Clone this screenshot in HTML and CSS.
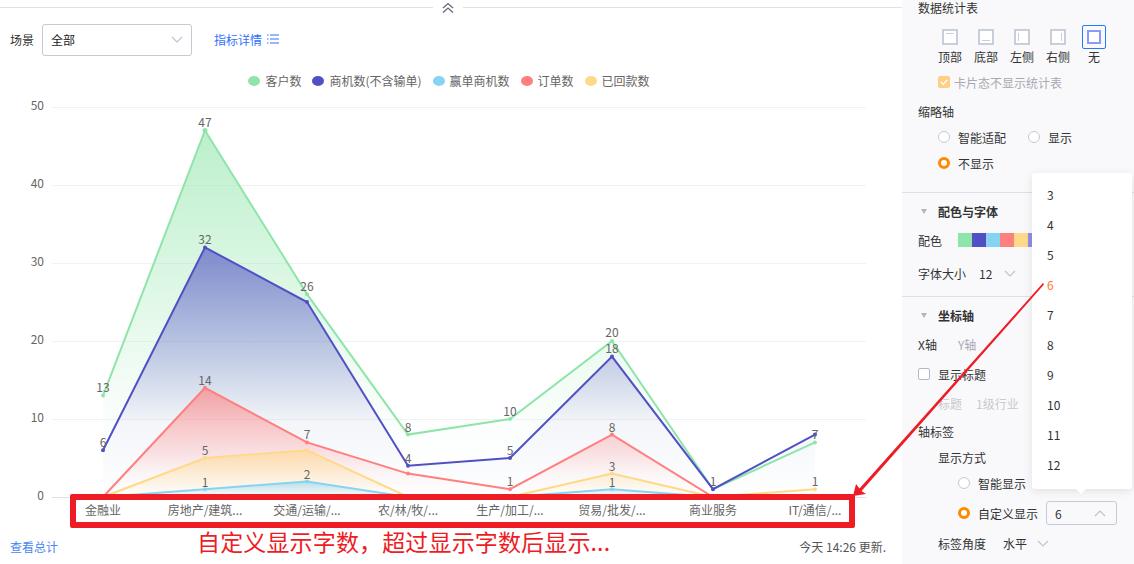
FILE: index.html
```html
<!DOCTYPE html>
<html lang="zh-CN">
<head>
    <meta charset="UTF-8">
    <title>自定义显示字数</title>
    <link rel="stylesheet" href="styles.css">
</head>
<body>
    <div class="app">
        <div class="main">
            <div class="fold">
                <span class="fold-line"></span>
                <svg class="fold-icon" width="30" height="14" viewBox="0 0 30 14">
                    <path d="M10 8l5-4.500 5 4.500M10 12.500l5-4.500 5 4.500" fill="none" stroke="#667" stroke-width="1.300"/>
                </svg>
                <span class="fold-line"></span>
            </div>

            <div class="filters">
                <span class="filter-label">场景</span>
                <div class="select">
                    <span>全部</span>
                    <svg width="12" height="7" viewBox="0 0 12 7"><path d="M1 1l5 5 5-5" fill="none" stroke="#c0c4cc" stroke-width="1.200"/></svg>
                </div>
                <a class="detail-link" href="#">指标详情
                    <svg width="12" height="10" viewBox="0 0 12 10"><path d="M3 1h9M3 5h9M3 9h9M0 1h1.500M0 5h1.500M0 9h1.500" stroke="#2f6fff" stroke-width="1"/></svg>
                </a>
            </div>

            <div class="legend">
                <span class="legend-item"><i class="mark c-green"></i>客户数</span>
                <span class="legend-item"><i class="mark c-blue"></i>商机数(不含输单)</span>
                <span class="legend-item"><i class="mark c-sky"></i>赢单商机数</span>
                <span class="legend-item"><i class="mark c-red"></i>订单数</span>
                <span class="legend-item"><i class="mark c-yellow"></i>已回款数</span>
            </div>

            <svg class="chart" width="902" height="434" viewBox="0 92 902 434">
                <defs>
                    <linearGradient id="g-green" x1="0" y1="0" x2="0" y2="1"><stop offset="0" stop-color="#8fe5a9" stop-opacity=".6"/><stop offset=".8" stop-color="#8fe5a9" stop-opacity=".03"/><stop offset="1" stop-color="#8fe5a9" stop-opacity="0"/></linearGradient>
                    <linearGradient id="g-blue" x1="0" y1="0" x2="0" y2="1"><stop offset="0" stop-color="#5050c4" stop-opacity=".65"/><stop offset=".7" stop-color="#5050c4" stop-opacity=".05"/><stop offset="1" stop-color="#5050c4" stop-opacity="0"/></linearGradient>
                    <linearGradient id="g-sky" x1="0" y1="0" x2="0" y2="1"><stop offset="0" stop-color="#87d3f2" stop-opacity=".6"/><stop offset="1" stop-color="#87d3f2" stop-opacity="0"/></linearGradient>
                    <linearGradient id="g-red" x1="0" y1="0" x2="0" y2="1"><stop offset="0" stop-color="#ff7f7f" stop-opacity=".65"/><stop offset=".8" stop-color="#ff7f7f" stop-opacity=".05"/><stop offset="1" stop-color="#ff7f7f" stop-opacity="0"/></linearGradient>
                    <linearGradient id="g-yellow" x1="0" y1="0" x2="0" y2="1"><stop offset="0" stop-color="#ffd98a" stop-opacity=".6"/><stop offset="1" stop-color="#ffd98a" stop-opacity="0"/></linearGradient>
                </defs>

                <g class="grid">
                    <line x1="52" y1="107.500" x2="866" y2="107.500"/>
                    <line x1="52" y1="185.500" x2="866" y2="185.500"/>
                    <line x1="52" y1="263.500" x2="866" y2="263.500"/>
                    <line x1="52" y1="341.500" x2="866" y2="341.500"/>
                    <line x1="52" y1="419.500" x2="866" y2="419.500"/>
                    <line class="base" x1="52" y1="497.500" x2="866" y2="497.500"/>
                </g>

                <g class="y-labels">
                    <text x="44" y="110">50</text>
                    <text x="44" y="188">40</text>
                    <text x="44" y="266">30</text>
                    <text x="44" y="344">20</text>
                    <text x="44" y="422">10</text>
                    <text x="44" y="500">0</text>
                </g>

                <polygon fill="url(#g-green)" points="103,497 103,395.600 205,130.400 307,294.200 408,434.600 510,419 612,341 713,489.200 815,442.400 815,497"/>
                <polygon fill="url(#g-blue)" points="103,497 103,450.200 205,247.400 307,302 408,465.800 510,458 612,356.600 713,489.200 815,434.600 815,497"/>
                <polygon fill="url(#g-red)" points="103,497 205,387.800 307,442.400 408,473.600 510,489.200 612,434.600 713,497 815,497"/>
                <polygon fill="url(#g-yellow)" points="103,497 205,458 307,450.200 408,497 510,497 612,473.600 713,497 815,489.200 815,497"/>
                <polygon fill="url(#g-sky)" points="103,497 205,489.200 307,481.400 408,497 510,497 612,489.200 713,497 815,497"/>

                <g class="series">
                    <polyline stroke="#8fe5a9" points="103,395.600 205,130.400 307,294.200 408,434.600 510,419 612,341 713,489.200 815,442.400"/>
                    <polyline stroke="#5050c4" points="103,450.200 205,247.400 307,302 408,465.800 510,458 612,356.600 713,489.200 815,434.600"/>
                    <polyline stroke="#87d3f2" points="103,497 205,489.200 307,481.400 408,497 510,497 612,489.200 713,497 815,497"/>
                    <polyline stroke="#ff7f7f" points="103,497 205,387.800 307,442.400 408,473.600 510,489.200 612,434.600 713,497 815,497"/>
                    <polyline stroke="#ffd98a" points="103,497 205,458 307,450.200 408,497 510,497 612,473.600 713,497 815,489.200"/>
                </g>

                <g fill="#8fe5a9">
                    <circle cx="103" cy="395.600" r="2"/><circle cx="205" cy="130.400" r="2.500"/><circle cx="307" cy="294.200" r="2"/><circle cx="408" cy="434.600" r="2"/><circle cx="510" cy="419" r="2"/><circle cx="612" cy="341" r="2"/><circle cx="815" cy="442.400" r="2"/>
                </g>
                <g fill="#5050c4">
                    <circle cx="103" cy="450.200" r="2"/><circle cx="205" cy="247.400" r="2"/><circle cx="307" cy="302" r="2"/><circle cx="408" cy="465.800" r="2"/><circle cx="510" cy="458" r="2"/><circle cx="612" cy="356.600" r="2"/><circle cx="713" cy="489.200" r="2"/><circle cx="815" cy="434.600" r="2"/>
                </g>
                <g fill="#ff7f7f">
                    <circle cx="205" cy="387.800" r="2"/><circle cx="307" cy="442.400" r="2"/><circle cx="408" cy="473.600" r="2"/><circle cx="510" cy="489.200" r="2"/><circle cx="612" cy="434.600" r="2"/>
                </g>
                <g fill="#ffd98a">
                    <circle cx="205" cy="458" r="2"/><circle cx="307" cy="450.200" r="2"/><circle cx="612" cy="473.600" r="2"/><circle cx="815" cy="489.200" r="2"/>
                </g>
                <g fill="#87d3f2">
                    <circle cx="205" cy="489.200" r="2"/><circle cx="307" cy="481.400" r="2"/><circle cx="612" cy="489.200" r="2"/>
                </g>

                <g class="values">
                    <text x="103" y="392">13</text>
                    <text x="205" y="127">47</text>
                    <text x="307" y="291">26</text>
                    <text x="408" y="432">8</text>
                    <text x="510" y="416">10</text>
                    <text x="612" y="337">20</text>
                    <text x="103" y="447">6</text>
                    <text x="205" y="244">32</text>
                    <text x="408" y="463">4</text>
                    <text x="510" y="455">5</text>
                    <text x="612" y="353">18</text>
                    <text x="713" y="486">1</text>
                    <text x="815" y="439">7</text>
                    <text x="205" y="385">14</text>
                    <text x="307" y="439">7</text>
                    <text x="510" y="486">1</text>
                    <text x="612" y="432">8</text>
                    <text x="205" y="455">5</text>
                    <text x="612" y="471">3</text>
                    <text x="815" y="486">1</text>
                    <text x="205" y="487">1</text>
                    <text x="307" y="479">2</text>
                    <text x="612" y="487">1</text>
                </g>

                <g class="x-labels">
                    <text x="103" y="515">金融业</text>
                    <text x="205" y="515">房地产/建筑...</text>
                    <text x="307" y="515">交通/运输/...</text>
                    <text x="408" y="515">农/林/牧/...</text>
                    <text x="510" y="515">生产/加工/...</text>
                    <text x="612" y="515">贸易/批发/...</text>
                    <text x="713" y="515">商业服务</text>
                    <text x="815" y="515">IT/通信/...</text>
                </g>
            </svg>

            <div class="foot">
                <a class="foot-link" href="#">查看总计</a>
                <span class="foot-time">今天 14:26 更新.</span>
            </div>
        </div>

        <div class="side">
            <div class="section">
                <div class="row first">数据统计表</div>
                <div class="layouts">
                    <div class="layout">
                        <span class="layout-box"><svg width="16" height="16" viewBox="0 0 16 16"><rect x="1" y="1" width="14" height="14" fill="#fff" stroke="#c9cedb" stroke-width="2"/><path d="M4 4.500h8" stroke="#c9cedb"/></svg></span>
                        顶部
                    </div>
                    <div class="layout">
                        <span class="layout-box"><svg width="16" height="16" viewBox="0 0 16 16"><rect x="1" y="1" width="14" height="14" fill="#fff" stroke="#c9cedb" stroke-width="2"/><path d="M4 11.500h8" stroke="#c9cedb"/></svg></span>
                        底部
                    </div>
                    <div class="layout">
                        <span class="layout-box"><svg width="16" height="16" viewBox="0 0 16 16"><rect x="1" y="1" width="14" height="14" fill="#fff" stroke="#c9cedb" stroke-width="2"/><path d="M4.500 4v8" stroke="#c9cedb"/></svg></span>
                        左侧
                    </div>
                    <div class="layout">
                        <span class="layout-box"><svg width="16" height="16" viewBox="0 0 16 16"><rect x="1" y="1" width="14" height="14" fill="#fff" stroke="#c9cedb" stroke-width="2"/><path d="M11.500 4v8" stroke="#c9cedb"/></svg></span>
                        右侧
                    </div>
                    <div class="layout">
                        <span class="layout-box on"><svg width="14" height="14" viewBox="0 0 14 14"><rect x="1" y="1" width="12" height="12" fill="#fff" stroke="#8a9cf5" stroke-width="2"/></svg></span>
                        无
                    </div>
                </div>
                <div class="row in1 check-row">
                    <span class="check on"><svg width="12" height="12" viewBox="0 0 12 12"><path d="M3 6l2.200 2.200L9.200 4" fill="none" stroke="#fff" stroke-width="1.300"/></svg></span>
                    <span class="muted">卡片态不显示统计表</span>
                </div>
                <div class="row mt-9">缩略轴</div>
                <div class="row tall in1 mt-3">
                    <label class="radio w-90"><i></i>智能适配</label>
                    <label class="radio"><i></i>显示</label>
                </div>
                <div class="row tall in1 mt-0">
                    <label class="radio on"><i></i>不显示</label>
                </div>
            </div>

            <div class="section s2">
                <div class="row head"><i class="tri"></i>配色与字体</div>
                <div class="row mt-9">
                    <span class="w-40">配色</span>
                    <span class="swatches">
                        <i class="c-green"></i><i class="c-blue"></i><i class="c-sky"></i><i class="c-red"></i><i class="c-yellow"></i><i class="c-violet"></i>
                    </span>
                </div>
                <div class="row mt-13">
                    <span class="w-61">字体大小</span>
                    <span class="w-25">12</span>
                    <svg width="12" height="7" viewBox="0 0 12 7"><path d="M1 1l5 5 5-5" fill="none" stroke="#c0c4cc" stroke-width="1.200"/></svg>
                </div>
            </div>

            <div class="section s3">
                <div class="row head"><i class="tri"></i>坐标轴</div>
                <div class="row mt-9">
                    <span class="w-40">X轴</span>
                    <span class="muted">Y轴</span>
                </div>
                <div class="row mt-10">
                    <span class="check"></span>
                    <span>显示标题</span>
                </div>
                <div class="row in1 mt-9 faint">
                    <span class="w-38">标题</span>
                    <span>1级行业</span>
                </div>
                <div class="row mt-8">轴标签</div>
                <div class="row in1 mt-6">显示方式</div>
                <div class="row in2 mt-6">
                    <label class="radio w-79"><i></i>智能显示</label>
                    <label class="radio"><i></i></label>
                </div>
                <div class="row in2 mt-8 custom-row">
                    <label class="radio w-88"><i class="ring"></i>自定义显示</label>
                    <div class="num-select">
                        <span>6</span>
                        <svg width="12" height="7" viewBox="0 0 12 7"><path d="M1 6l5-5 5 5" fill="none" stroke="#c0c4cc" stroke-width="1.200"/></svg>
                    </div>
                </div>
                <div class="row in1 mt-8">
                    <span class="w-65">标签角度</span>
                    <span class="w-34">水平</span>
                    <svg width="12" height="7" viewBox="0 0 12 7"><path d="M1 1l5 5 5-5" fill="none" stroke="#c0c4cc" stroke-width="1.200"/></svg>
                </div>
            </div>

            <ul class="dropdown">
                <li>3</li>
                <li>4</li>
                <li>5</li>
                <li class="active">6</li>
                <li>7</li>
                <li>8</li>
                <li>9</li>
                <li>10</li>
                <li>11</li>
                <li>12</li>
            </ul>
        </div>

        <!-- 标注 -->
        <div class="note-box"></div>
        <div class="note-text">自定义显示字数，超过显示字数后显示...</div>
        <svg class="note-arrow" width="1134" height="564" viewBox="0 0 1134 564">
            <polygon fill="#ee1c25" points="1043,283 1044,284.500 861.500,491 866,494 853,496 856,484 859.500,488.500"/>
        </svg>
    </div>
</body>
</html>
```

FILE: styles.css
```css
* {
    margin: 0;
    padding: 0;
    box-sizing: border-box;
}

body {
    font-family: "Noto Sans CJK SC", "Liberation Sans", sans-serif;
    font-size: 12px;
    color: #333;
    background-color: #fff;
}

a {
    text-decoration: none;
}

i {
    font-style: normal;
}

.app {
    position: relative;
    display: flex;
    overflow: hidden;
    width: 1134px;
    height: 564px;
}

/* 左侧图表 */
.main {
    flex: none;
    width: 902px;
}

.fold {
    display: flex;
    align-items: center;
    height: 14px;
}

.fold-line {
    flex: 1;
    height: 1px;
    background-color: #e0e0e6;
}

.fold-line:first-child {
    flex: none;
    width: 433px;
}

.fold-icon {
    display: block;
}

.filters {
    display: flex;
    align-items: center;
    margin-top: 10px;
    padding-left: 10px;
    height: 32px;
}

.filter-label {
    width: 32px;
    padding-bottom: 2px;
}

.select {
    display: flex;
    align-items: center;
    justify-content: space-between;
    padding: 0 8px 2px;
    width: 150px;
    height: 32px;
    border: 1px solid #c8c8d4;
    border-radius: 3px;
    color: #222;
}

.detail-link {
    display: flex;
    align-items: center;
    gap: 5px;
    margin-left: 22px;
    padding-bottom: 2px;
    color: #2f6fff;
}

.legend {
    display: flex;
    justify-content: center;
    gap: 11px;
    margin-top: 16px;
    padding-right: 4px;
    height: 18px;
    line-height: 18px;
    color: #666;
}

.legend-item {
    display: flex;
    align-items: center;
    gap: 5px;
}

.mark {
    width: 12px;
    height: 10px;
    border-radius: 50%;
}

.c-green {
    background-color: #8fe5a9;
}

.c-blue {
    background-color: #5050c4;
}

.c-sky {
    background-color: #87d3f2;
}

.c-red {
    background-color: #ff7f7f;
}

.c-yellow {
    background-color: #ffd98a;
}

.c-violet {
    background-color: #8f8fe0;
}

.chart {
    display: block;
    margin-top: 2px;
    font-size: 12px;
}

.grid line {
    stroke: #f2f2f4;
    stroke-width: 1;
}

.grid .base {
    stroke: #e0e0ea;
}

.y-labels text {
    fill: #666;
    text-anchor: end;
}

.series polyline {
    fill: none;
    stroke-width: 2;
}

.values text {
    fill: #666;
    text-anchor: middle;
}

.x-labels text {
    fill: #666;
    text-anchor: middle;
}

.foot {
    display: flex;
    justify-content: space-between;
    margin-top: 11px;
    padding: 0 16px 0 10px;
    line-height: 20px;
}

.foot-link {
    color: #4a86f0;
}

.foot-time {
    color: #555;
}

/* 右侧设置 */
.side {
    position: relative;
    flex: none;
    width: 232px;
    background-color: #f9f9fb;
}

.section {
    height: 193px;
    border-bottom: 1px solid #dfdfea;
}

.s2 {
    height: 104px;
    padding-top: 8px;
}

.s3 {
    height: auto;
    padding-top: 8px;
    border-bottom: 0;
}

.row {
    display: flex;
    align-items: center;
    height: 20px;
    padding-left: 16px;
}

.row.first {
    height: 14px;
}

.row.tall {
    height: 26px;
}

.row.custom-row {
    height: 24px;
}

.in1 {
    padding-left: 36px;
}

.in2 {
    padding-left: 56px;
}

.mt-0 {
    margin-top: 0;
}

.mt-3 {
    margin-top: 3px;
}

.mt-6 {
    margin-top: 6px;
}

.mt-8 {
    margin-top: 8px;
}

.mt-9 {
    margin-top: 9px;
}

.mt-10 {
    margin-top: 10px;
}

.mt-13 {
    margin-top: 13px;
}

.w-25 {
    width: 25px;
}

.w-34 {
    width: 34px;
}

.w-38 {
    width: 38px;
}

.w-40 {
    width: 40px;
}

.w-61 {
    width: 61px;
}

.w-65 {
    width: 65px;
}

.w-79 {
    width: 79px;
}

.w-88 {
    width: 88px;
}

.w-90 {
    width: 90px;
}

.layouts {
    display: flex;
    margin-top: 11px;
    padding-left: 30px;
}

.layout {
    display: flex;
    flex-direction: column;
    align-items: center;
    width: 36px;
    line-height: 16px;
}

.layout-box {
    display: flex;
    align-items: center;
    justify-content: center;
    width: 24px;
    height: 24px;
}

.layout-box.on {
    border: 1px solid #1f7cff;
    border-radius: 2px;
}

.layout-box svg {
    display: block;
}

.check-row {
    margin-top: 7px;
}

.check {
    display: block;
    flex: none;
    margin-right: 8px;
    width: 12px;
    height: 12px;
    border: 1px solid #b8b8c4;
    border-radius: 2px;
    background-color: #fff;
}

.check.on {
    margin-right: 4px;
    border: 0;
    background-color: #ffcf87;
}

.check svg {
    display: block;
}

.muted {
    color: #a8a8b2;
}

.faint {
    color: #c8c8d0;
}

.radio {
    display: flex;
    align-items: center;
    gap: 8px;
}

.radio i {
    flex: none;
    width: 12px;
    height: 12px;
    border: 1px solid #c8c8d4;
    border-radius: 50%;
    background-color: #fff;
}

.radio.on i,
.radio .ring {
    border: 3px solid #ff8a00;
}

.head {
    font-weight: bold;
}

.tri {
    margin-right: 11px;
    margin-left: 3px;
    width: 0;
    height: 0;
    border-top: 5px solid #b4b4c0;
    border-right: 3.500px solid transparent;
    border-left: 3.500px solid transparent;
}

.swatches {
    display: flex;
}

.swatches i {
    width: 14px;
    height: 14px;
}

.num-select {
    display: flex;
    align-items: center;
    justify-content: space-between;
    padding: 0 10px 0 8px;
    width: 71px;
    height: 24px;
    border: 1px solid #c8c8d8;
    border-radius: 3px;
}

.dropdown {
    position: absolute;
    top: 173px;
    left: 130px;
    width: 100px;
    height: 316px;
    padding-top: 7px;
    list-style: none;
    border-radius: 3px;
    background-color: #fff;
    box-shadow: 0 2px 10px rgba(0, 0, 0, .1);
}

.dropdown::after {
    content: "";
    position: absolute;
    bottom: -5px;
    left: 44px;
    border-top: 5px solid #fff;
    border-right: 5px solid transparent;
    border-left: 5px solid transparent;
}

.dropdown li {
    padding-left: 15px;
    height: 30px;
    line-height: 30px;
}

.dropdown .active {
    color: #ff7a2b;
}

/* 标注 */
.note-box {
    position: absolute;
    top: 494px;
    left: 70px;
    width: 785px;
    height: 34px;
    border: 6px solid #ee1c25;
    border-radius: 2px;
}

.note-text {
    position: absolute;
    top: 525px;
    left: 197px;
    font-size: 23px;
    line-height: 33px;
    letter-spacing: .15px;
    color: #ee1c25;
    white-space: nowrap;
}

.note-arrow {
    position: absolute;
    top: 0;
    left: 0;
    pointer-events: none;
}
```
